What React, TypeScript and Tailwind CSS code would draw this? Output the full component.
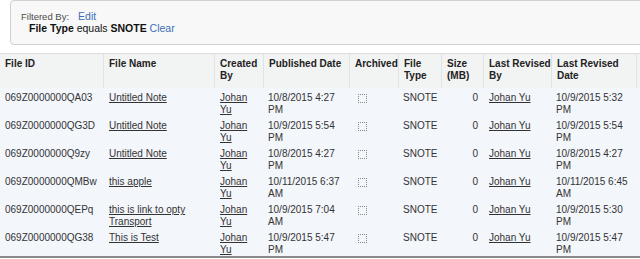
import React from "react";

type Row = {
  id: string;
  name: string[];
  pub: string[];
  rev: string[];
};

const rows: Row[] = [
  { id: "069Z0000000QA03", name: ["Untitled Note"], pub: ["10/8/2015 4:27", "PM"], rev: ["10/9/2015 5:32", "PM"] },
  { id: "069Z0000000QG3D", name: ["Untitled Note"], pub: ["10/9/2015 5:54", "PM"], rev: ["10/9/2015 5:54", "PM"] },
  { id: "069Z0000000Q9zy", name: ["Untitled Note"], pub: ["10/8/2015 4:27", "PM"], rev: ["10/8/2015 4:27", "PM"] },
  { id: "069Z0000000QMBw", name: ["this apple"], pub: ["10/11/2015 6:37", "AM"], rev: ["10/11/2015 6:45", "AM"] },
  { id: "069Z0000000QEPq", name: ["this is link to opty", "Transport"], pub: ["10/9/2015 7:04", "AM"], rev: ["10/9/2015 5:30", "PM"] },
  { id: "069Z0000000QG38", name: ["This is Test"], pub: ["10/9/2015 5:47", "PM"], rev: ["10/9/2015 5:47", "PM"] },
];

const cols = "grid grid-cols-[104px_111px_49px_86px_49px_43px_42px_68px_85px_60px]";

const headers: string[][] = [
  ["File ID"],
  ["File Name"],
  ["Created", "By"],
  ["Published Date"],
  ["Archived"],
  ["File", "Type"],
  ["Size", "(MB)"],
  ["Last Revised", "By"],
  ["Last Revised", "Date"],
  [""],
];

function Lines({ lines }: { lines: string[] }) {
  return (
    <>
      {lines.map((l, i) => (
        <div key={i} className="whitespace-nowrap">
          {l}
        </div>
      ))}
    </>
  );
}

export default function App() {
  return (
    <div
      className="w-[640px] h-[259px] overflow-hidden bg-white text-[#222] text-[10px] leading-[12px]"
      style={{ fontFamily: '"Liberation Sans", Arial, sans-serif' }}
    >
      <div className="ml-[10px] w-[700px] h-[45px] border border-[#d0d0d0] rounded-[4px] bg-[#f8f8f8] pl-[10px] pt-[9px]">
        <div className="flex items-baseline">
          <span className="text-[9.5px] text-[#4a4a4a]">Filtered By:</span>
          <span className="ml-[9px] text-[10.5px] text-[#3b6fb6]">Edit</span>
        </div>
        <div className="pl-[8px] mt-[-1px] text-[10.5px] text-[#111]">
          <span className="font-bold">File Type</span> equals <span className="font-bold">SNOTE</span>{" "}
          <span className="text-[#3b6fb6]">Clear</span>
        </div>
      </div>

      <div className="mt-[8px] w-[700px]">
        <div className={`${cols} h-[35px] bg-[#f2f3f3] border-t border-[#dcdcdc] font-bold text-[#222]`}>
          {headers.map((h, i) => (
            <div key={i} className="pl-[5px] pt-[4px] border-r border-[#e0e3e5]">
              <Lines lines={h} />
            </div>
          ))}
        </div>
        {rows.map((r, i) => (
          <div key={i} className={`${cols} h-[28px] bg-[#f3f6fb] text-[#333]`}>
            <div className="pl-[5px] pt-[4px]">{r.id}</div>
            <div className="pl-[5px] pt-[4px] underline">
              <Lines lines={r.name} />
            </div>
            <div className="pl-[5px] pt-[4px] underline">
              <div>Johan</div>
              <div>Yu</div>
            </div>
            <div className="pl-[4px] pt-[4px]">
              <Lines lines={r.pub} />
            </div>
            <div className="pl-[8px] pt-[6px]">
              <div className="w-[9px] h-[9px] border border-dotted border-[#888]" />
            </div>
            <div className="pl-[4px] pt-[4px]">SNOTE</div>
            <div className="pr-[6px] pt-[4px] text-right">0</div>
            <div className="pl-[5px] pt-[4px] underline whitespace-nowrap">Johan Yu</div>
            <div className="pl-[4px] pt-[4px]">
              <Lines lines={r.rev} />
            </div>
            <div />
          </div>
        ))}
        <div className="h-[2px] bg-[#8a8a8a]" />
      </div>
    </div>
  );
}
